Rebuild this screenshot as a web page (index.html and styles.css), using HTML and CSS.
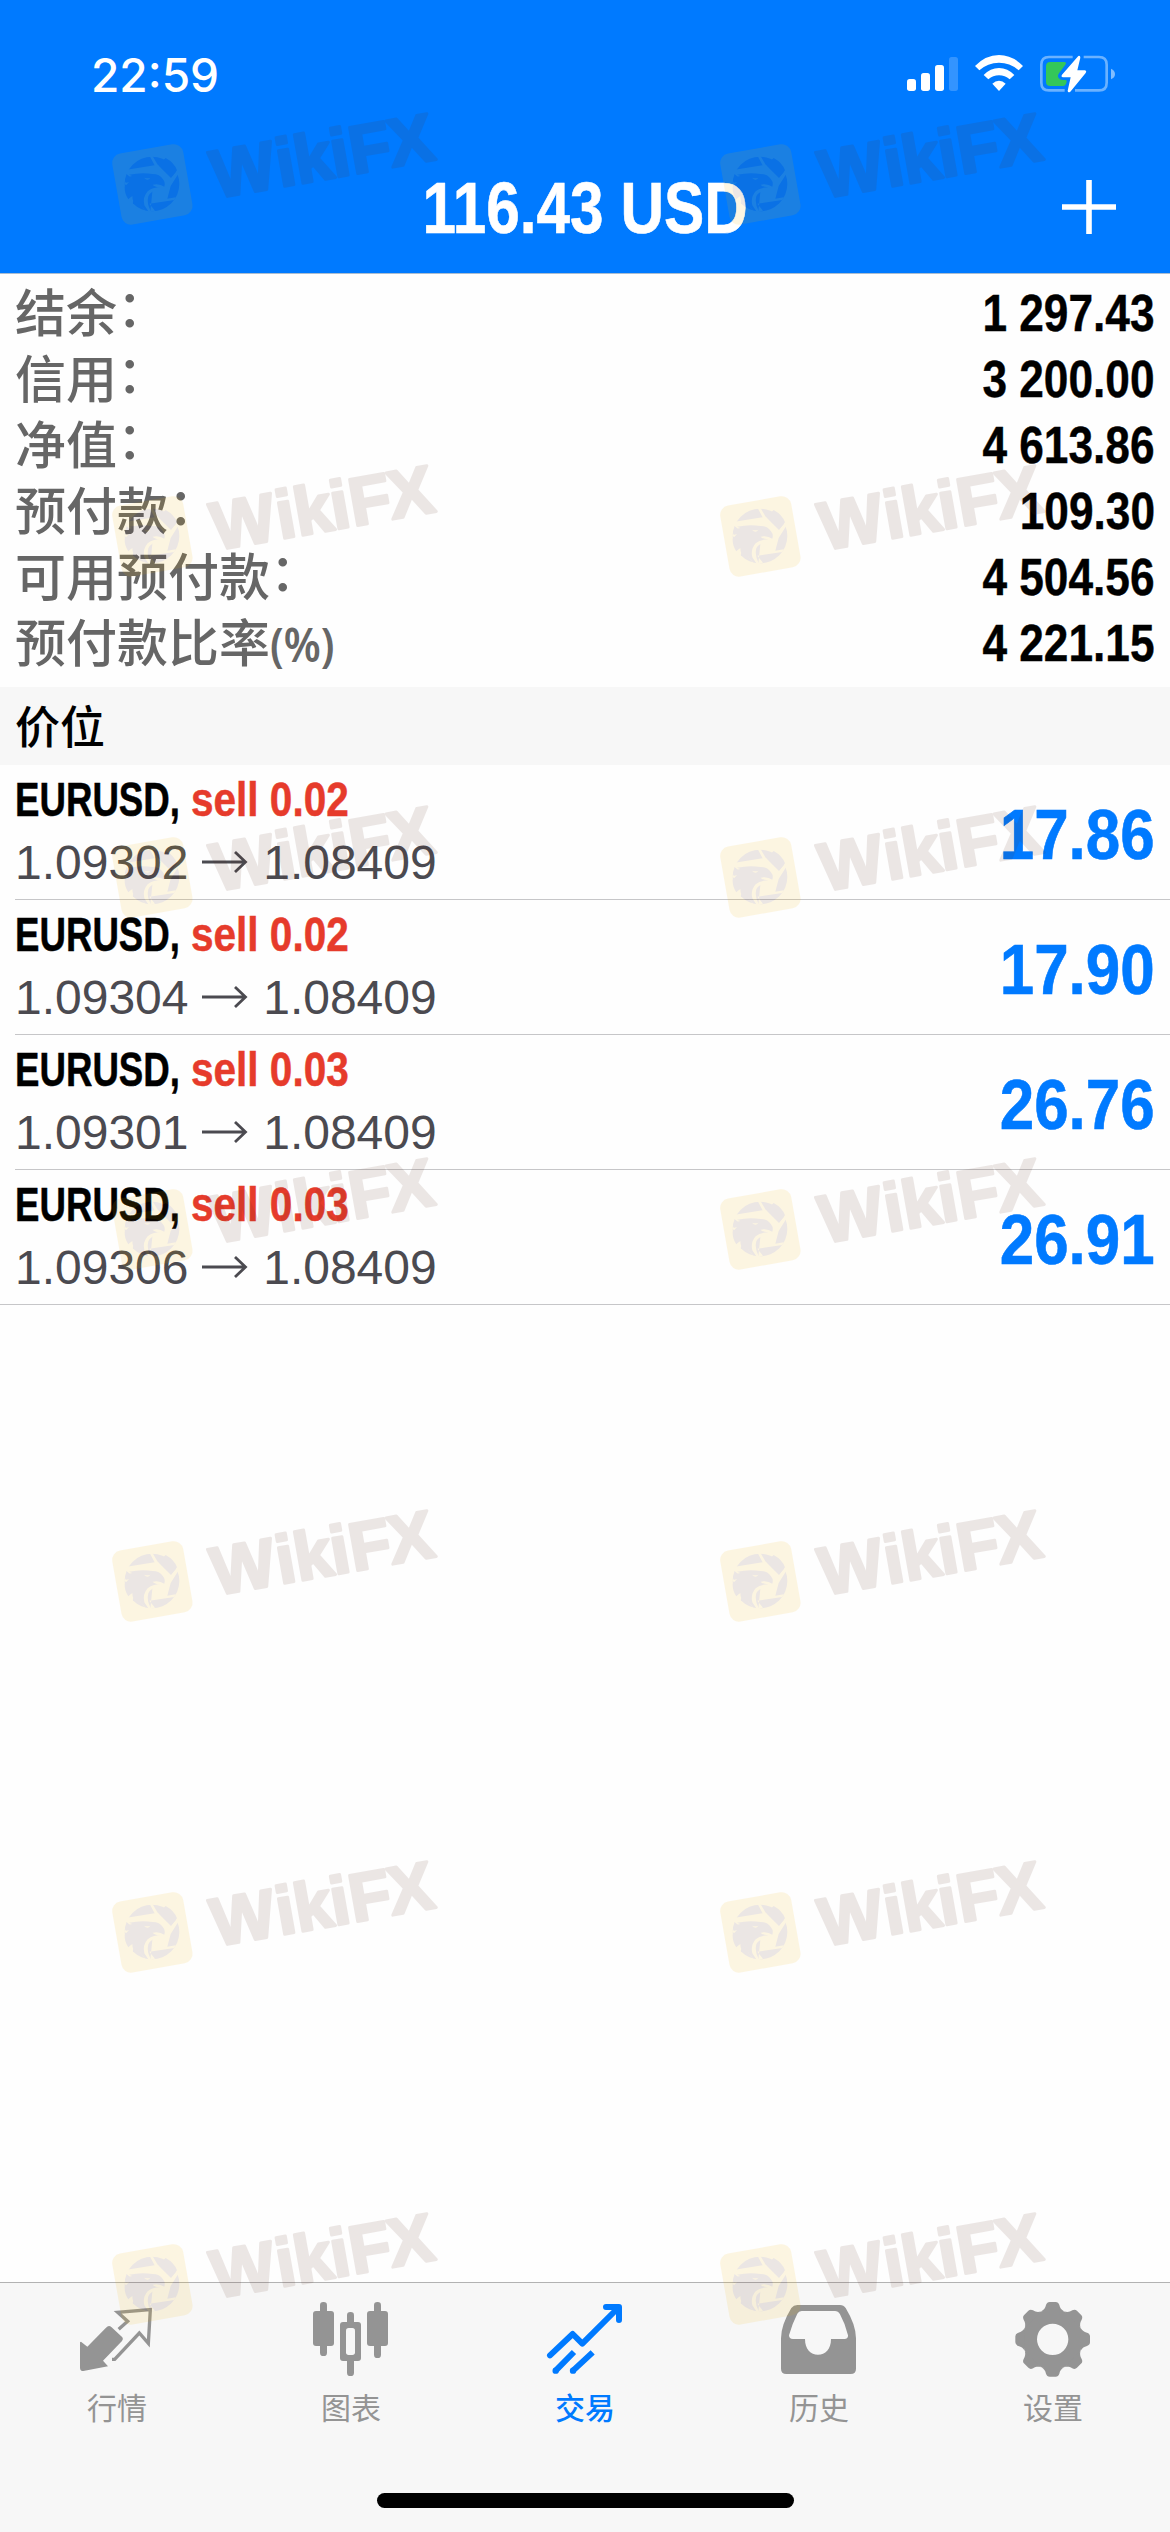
FILE: index.html
```html
<!DOCTYPE html>
<html lang="zh-CN">
<head>
<meta charset="utf-8">
<title>交易</title>
<link rel="stylesheet" href="styles.css">
</head>
<body>
<div class="screen">
  <header class="header">
    <div class="status">
      <span class="clock">22:59</span>
      <svg class="status-icons" viewBox="0 0 705 180">
        <g fill="#fff">
          <rect x="36" y="102" width="27" height="36" rx="8"/>
          <rect x="78" y="84" width="27" height="54" rx="8"/>
          <rect x="120" y="60" width="27" height="78" rx="8"/>
          <rect x="162" y="36" width="27" height="102" rx="8" opacity=".2"/>
          <path d="M240 63 Q272 30 312 30 Q352 30 384 63 L371 76 Q346 53 312 53 Q278 53 253 76 Z"/>
          <path d="M266 90 Q286 69 312 69 Q338 69 358 90 L344 103 Q330 91 312 91 Q294 91 280 103 Z"/>
          <path d="M292 116 Q301 107 312 107 Q323 107 332 116 L312 138 Z"/>
        </g>
        <path d="M533 36 H462 Q439 36 439 59 V113 Q439 136 462 136 H509 M540 136 H612 Q635 136 635 113 V59 Q635 36 612 36 H566" fill="none" stroke="#fff" stroke-opacity=".42" stroke-width="8"/>
        <path d="M648 71 Q660 76 660 87 Q660 98 648 103 Z" fill="#fff" opacity=".5"/>
        <path d="M466 51 H508 Q516 52 511 59 L493 83 Q486 92 491 99 Q495 105 503 105 H512 Q517 106 515 111 Q512 123 504 123 H466 Q453 123 453 110 V64 Q453 51 466 51 Z" fill="#34c759"/>
        <path d="M550 33 Q556 31 556 38 L547 76 H570 Q576 78 572 84 L526 140 Q519 145 518 137 L527 97 H504 Q497 95 501 89 Z" fill="#fff"/>
      </svg>
    </div>
    <div class="nav">
      <h1 class="title">116.43 USD</h1>
      <svg class="add" viewBox="0 0 54 54"><path d="M27 0V54M0 27H54" stroke="#fff" stroke-width="5.6"/></svg>
    </div>
  </header>

  <section class="summary">
    <div class="line"><span>结余<i>：</i></span><b>1 297.43</b></div>
    <div class="line"><span>信用<i>：</i></span><b>3 200.00</b></div>
    <div class="line"><span>净值<i>：</i></span><b>4 613.86</b></div>
    <div class="line"><span>预付款<i>：</i></span><b>109.30</b></div>
    <div class="line"><span>可用预付款<i>：</i></span><b>4 504.56</b></div>
    <div class="line"><span>预付款比率<em>(%)</em></span><b>4 221.15</b></div>
  </section>

  <h2 class="section-title">价位</h2>

  <main class="positions">
    <article class="position">
      <div class="info">
        <div class="deal"><span class="symbol">EURUSD,</span><span class="side">sell 0.02</span></div>
        <div class="prices">1.09302 <svg class="arrow" viewBox="0 0 48 24"><path d="M0 12H44M33 2L43.5 12L33 22" fill="none" stroke="currentColor" stroke-width="2.8"/></svg> 1.08409</div>
      </div>
      <div class="profit">17.86</div>
    </article>
    <article class="position">
      <div class="info">
        <div class="deal"><span class="symbol">EURUSD,</span><span class="side">sell 0.02</span></div>
        <div class="prices">1.09304 <svg class="arrow" viewBox="0 0 48 24"><path d="M0 12H44M33 2L43.5 12L33 22" fill="none" stroke="currentColor" stroke-width="2.8"/></svg> 1.08409</div>
      </div>
      <div class="profit">17.90</div>
    </article>
    <article class="position">
      <div class="info">
        <div class="deal"><span class="symbol">EURUSD,</span><span class="side">sell 0.03</span></div>
        <div class="prices">1.09301 <svg class="arrow" viewBox="0 0 48 24"><path d="M0 12H44M33 2L43.5 12L33 22" fill="none" stroke="currentColor" stroke-width="2.8"/></svg> 1.08409</div>
      </div>
      <div class="profit">26.76</div>
    </article>
    <article class="position">
      <div class="info">
        <div class="deal"><span class="symbol">EURUSD,</span><span class="side">sell 0.03</span></div>
        <div class="prices">1.09306 <svg class="arrow" viewBox="0 0 48 24"><path d="M0 12H44M33 2L43.5 12L33 22" fill="none" stroke="currentColor" stroke-width="2.8"/></svg> 1.08409</div>
      </div>
      <div class="profit">26.91</div>
    </article>
  </main>

  <footer class="footer">
    <nav class="tabs">
      <a class="tab">
        <svg viewBox="234 357 234 234" fill="currentColor">
          <path d="M243 485 L262 500 L318 443 Q326 434 334 441 L367 472 Q371 477 366 483 L309 542 L324 559 L250 573 Q240 573 240 563 V487 Z"/>
          <path d="M356 448 L383 424 L353 397 L451 389 L445 490 L418 459 L344 538 H336" fill="none" stroke="currentColor" stroke-width="10"/>
        </svg>
        <span>行情</span>
      </a>
      <a class="tab">
        <svg viewBox="936 357 234 234" fill="currentColor">
          <rect x="960" y="366" width="21" height="162" rx="10"/><rect x="939" y="393" width="63" height="105" rx="9"/>
          <rect x="1122" y="366" width="21" height="168" rx="10"/><rect x="1101" y="393" width="63" height="105" rx="9"/>
          <rect x="1041" y="396" width="21" height="192" rx="10"/><rect x="1020" y="426" width="63" height="117" rx="9"/>
          <rect x="1038" y="444" width="27" height="81" rx="8" fill="#f7f7f7"/>
        </svg>
        <span>图表</span>
      </a>
      <a class="tab active">
        <svg viewBox="48 27 234 234" fill="none" stroke="currentColor" stroke-width="18" stroke-linejoin="round">
          <path d="M60 196 L128 132 L157 161 L264 54 M228 51 H267 V90" stroke-linecap="round"/>
          <path d="M132 186 L77 242 M188 187 L129 242"/>
          <g fill="currentColor" stroke="none"><circle cx="77" cy="242" r="9.5"/><circle cx="129" cy="242" r="9.5"/></g>
        </svg>
        <span>交易</span>
      </a>
      <a class="tab">
        <svg viewBox="750 27 234 234" fill="currentColor">
          <path fill-rule="evenodd" d="M802 45 H930 Q941 45 947 54 Q978 105 978 145 V236 Q978 252 962 252 H769 Q753 252 753 236 V145 Q753 105 784 54 Q791 45 802 45 Z M815 63 Q806 63 802 71 Q786 102 777 136 Q777 147 789 147 H825 C825 178 842 194 864 194 C886 194 903 178 903 147 H943 Q955 147 954 136 Q946 102 930 73 Q924 63 915 63 Z"/>
        </svg>
        <span>历史</span>
      </a>
      <a class="tab">
        <svg viewBox="0 0 234 234" fill="currentColor">
          <defs><path id="tooth" d="M-34 -84 C-26 -89 -22 -94 -20 -103 Q-17 -112 -9 -112 H9 Q17 -112 20 -103 C22 -94 26 -89 34 -84 Z"/></defs>
          <g transform="translate(116 121)">
            <circle r="68.5" fill="none" stroke="currentColor" stroke-width="43"/>
            <use href="#tooth"/><use href="#tooth" transform="rotate(45)"/><use href="#tooth" transform="rotate(90)"/><use href="#tooth" transform="rotate(135)"/>
            <use href="#tooth" transform="rotate(180)"/><use href="#tooth" transform="rotate(225)"/><use href="#tooth" transform="rotate(270)"/><use href="#tooth" transform="rotate(315)"/>
          </g>
        </svg>
        <span>设置</span>
      </a>
    </nav>
    <div class="home-indicator"></div>
  </footer>

  <svg class="watermarks" viewBox="0 0 1170 2532">
    <defs>
      <g id="mark">
        <g transform="rotate(-10)">
          <rect x="7.8" y="74.7" width="72" height="72" rx="9.5" fill="#f5b400"/>
          <text class="brand" x="103.5 169 187.5 224 243.5 283" y="135.5">WikiFX</text>
        </g>
        <!-- eagle inside a shutter ring -->
        <g transform="translate(15 55) scale(.3333)">
          <circle cx="141" cy="138" r="82" fill="#5a2d1e"/>
          <g fill="#f5b400">
            <path d="M134 54 L143 55 L158 80 L150 84 Z"/>
            <path d="M56 97 L158 80 L190 118 L179 137 L166 151 Q136 160 130 175 Q124 196 138 221 L128 219 Q100 210 102 170 Q78 190 84 203 L62 180 L70 150 L58 136 Q68 120 82 122 L60 104 Z"/>
            <path d="M150 84 L158 80 L198 120 L218 95 L222 104 L197 144 L187 182 L212 178 L208 186 L133 197 L150 218 L136 221 Z"/>
          </g>
          <path fill="#5a2d1e" d="M158 82 L182 60 Q208 74 216 97 L198 118 L166 76 Z"/>
          <path fill="#5a2d1e" d="M72 110 Q110 102 143 108 Q164 108 174 124 Q182 134 178 146 Q162 135 143 140 Q148 147 166 148 Q142 148 128 160 Q112 178 118 202 L130 220 Q106 214 98 180 L96 204 Q82 194 82 174 Q74 180 70 184 Q58 166 59 146 L72 132 Q58 138 61 128 Q68 116 82 114 Z"/>
          <path fill="#f5b400" d="M117 119 Q127 122 136 119 Q128 131 117 119 Z"/>
        </g>
      </g>
    </defs>
    <g class="mark"><use href="#mark" x="90" y="83"/></g><g class="mark"><use href="#mark" x="698" y="83"/></g>
    <g class="mark"><use href="#mark" x="90" y="435"/></g><g class="mark"><use href="#mark" x="698" y="435"/></g>
    <g class="mark"><use href="#mark" x="90" y="776"/></g><g class="mark"><use href="#mark" x="698" y="776"/></g>
    <g class="mark"><use href="#mark" x="90" y="1128"/></g><g class="mark"><use href="#mark" x="698" y="1128"/></g>
    <g class="mark"><use href="#mark" x="90" y="1480"/></g><g class="mark"><use href="#mark" x="698" y="1480"/></g>
    <g class="mark"><use href="#mark" x="90" y="1831"/></g><g class="mark"><use href="#mark" x="698" y="1831"/></g>
    <g class="mark"><use href="#mark" x="90" y="2183"/></g><g class="mark"><use href="#mark" x="698" y="2183"/></g>
  </svg>
</div>
</body>
</html>
```
FILE: styles.css
```css
* { box-sizing: border-box; margin: 0; padding: 0; }

body {
  width: 1170px;
  background: #fff;
  font-family: "Liberation Sans", "Noto Sans CJK SC", sans-serif;
}

.screen {
  position: relative;
  display: flex;
  flex-direction: column;
  width: 1170px;
  height: 2532px;
  overflow: hidden;
  background: #fefefe;
}

.header {
  height: 274px;
  background: #007aff;
  border-bottom: 1px solid #a9bdd2;
  color: #fff;
}

.status {
  display: flex;
  justify-content: space-between;
  align-items: flex-start;
  height: 141px;
  padding: 45px 40px 0 91px;
}

.clock {
  font: 550 46px/60px Inter, sans-serif;
}

.status-icons { width: 235px; height: 60px; }

.nav {
  display: grid;
  grid-template-columns: 1fr auto 1fr;
  align-items: center;
  height: 132px;
  padding-right: 54px;
  padding-left: 54px;
}

.title {
  grid-column: 2;
  padding-top: 2px;
  font-size: 72px;
  line-height: 100px;
  font-weight: 700;
  white-space: nowrap;
  transform: scaleX(.838);
  -webkit-text-stroke: .6px currentColor;
}

.add { justify-self: end; width: 54px; height: 54px; }

.summary {
  height: 413px;
  padding: 7px 15px 0;
}

.line {
  display: flex;
  justify-content: space-between;
  height: 66px;
  line-height: 66px;
  font-size: 51px;
}

.line span {
  margin-top: -4px;
  font-family: "Noto Sans CJK SC", sans-serif;
  font-weight: 500;
  color: #666;
}

.line i {
  position: relative;
  top: -5px;
  font-style: normal;
}

.line em {
  display: inline-block;
  font-family: "Noto Sans", sans-serif;
  font-size: 46px;
  font-style: normal;
  font-weight: 600;
  transform: scaleX(.92);
  transform-origin: left;
}

.line b {
  color: #000;
  transform: scaleX(.867);
  transform-origin: right;
  -webkit-text-stroke: .4px currentColor;
}

.section-title {
  height: 78px;
  padding-left: 15px;
  background: #f7f7f7;
  font: 500 45px/76px "Noto Sans CJK SC", sans-serif;
}

.positions { flex: 1; }

.position {
  display: flex;
  justify-content: space-between;
  height: 135px;
  margin-left: 15px;
  padding-right: 15px;
  border-bottom: 1px solid #c6c6c8;
}

.position:last-child {
  margin-left: 0;
  padding-left: 15px;
}

.info {
  display: flex;
  flex-direction: column;
  gap: 4px;
  padding-top: 4px;
}

.deal {
  display: flex;
  font-size: 49px;
  line-height: 60px;
  font-weight: 700;
  white-space: pre;
  -webkit-text-stroke: .5px currentColor;
}

.symbol {
  width: 176px;
  transform: scaleX(.748);
  transform-origin: left;
}

.side {
  color: #e63b2b;
  transform: scaleX(.827);
  transform-origin: left;
}

.prices {
  color: #4b4a50;
  font-size: 48px;
  line-height: 60px;
  white-space: nowrap;
}

.arrow { width: 48px; height: 24px; vertical-align: 5px; }

.profit {
  color: #007aff;
  font-size: 71px;
  font-weight: 700;
  line-height: 139px;
  transform: scaleX(.872);
  transform-origin: right;
  -webkit-text-stroke: .6px currentColor;
}

.footer {
  display: flex;
  flex-direction: column;
  justify-content: space-between;
  align-items: center;
  height: 250px;
  padding: 16px 0 24px;
  border-top: 1px solid #b2b2b2;
  background: #f7f7f7;
}

.tabs { display: flex; width: 100%; }

.tab {
  flex: 1;
  display: flex;
  flex-direction: column;
  align-items: center;
  gap: 7px;
  color: #949494;
  font: 400 30px/44px "Noto Sans CJK SC", sans-serif;
}

.tab svg { width: 78px; height: 78px; }

.active { color: #007aff; font-weight: 500; }

.home-indicator {
  width: 417px;
  height: 15px;
  border-radius: 8px;
  background: #000;
}

.watermarks {
  position: absolute;
  inset: 0;
  width: 1170px;
  height: 2532px;
  pointer-events: none;
}

.mark { opacity: .11; }

.brand {
  font: 700 68px "Liberation Sans", sans-serif;
  fill: #5a2d1e;
  stroke: #5a2d1e;
  stroke-width: 3px;
  stroke-linejoin: round;
}
```
